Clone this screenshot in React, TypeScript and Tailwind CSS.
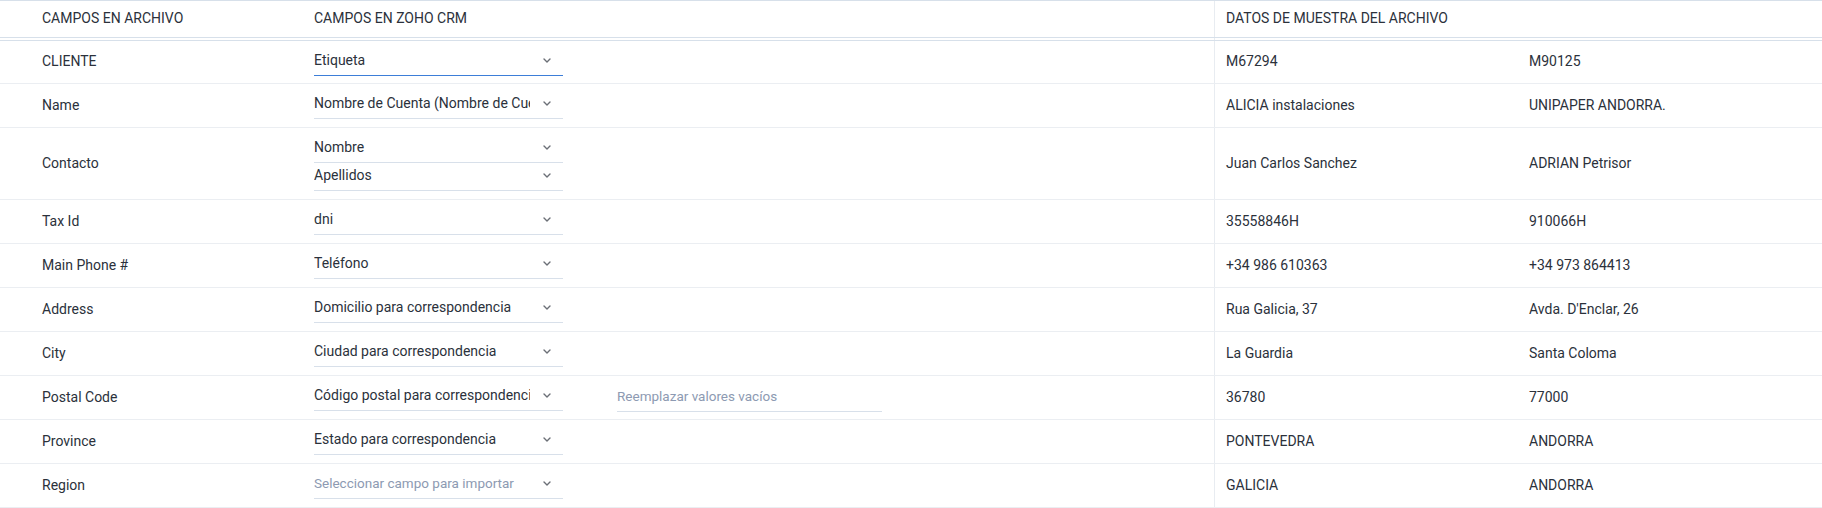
import React from "react";

type Row = {
  label: string;
  selects: { value: string; placeholder?: boolean; focused?: boolean }[];
  replace?: boolean;
  d1: string;
  d2: string;
};

const rows: Row[] = [
  { label: "CLIENTE", selects: [{ value: "Etiqueta", focused: true }], d1: "M67294", d2: "M90125" },
  { label: "Name", selects: [{ value: "Nombre de Cuenta (Nombre de Cuenta)" }], d1: "ALICIA instalaciones", d2: "UNIPAPER ANDORRA." },
  { label: "Contacto", selects: [{ value: "Nombre" }, { value: "Apellidos" }], d1: "Juan Carlos Sanchez", d2: "ADRIAN Petrisor" },
  { label: "Tax Id", selects: [{ value: "dni" }], d1: "35558846H", d2: "910066H" },
  { label: "Main Phone #", selects: [{ value: "Teléfono" }], d1: "+34 986 610363", d2: "+34 973 864413" },
  { label: "Address", selects: [{ value: "Domicilio para correspondencia" }], d1: "Rua Galicia, 37", d2: "Avda. D'Enclar, 26" },
  { label: "City", selects: [{ value: "Ciudad para correspondencia" }], d1: "La Guardia", d2: "Santa Coloma" },
  { label: "Postal Code", selects: [{ value: "Código postal para correspondencia" }], replace: true, d1: "36780", d2: "77000" },
  { label: "Province", selects: [{ value: "Estado para correspondencia" }], d1: "PONTEVEDRA", d2: "ANDORRA" },
  { label: "Region", selects: [{ value: "Seleccionar campo para importar", placeholder: true }], d1: "GALICIA", d2: "ANDORRA" },
];

function Chevron() {
  return (
    <svg width="8" height="5" viewBox="0 0 8 5" className="shrink-0">
      <path d="M1 1 L4 4 L7 1" fill="none" stroke="#6b6f76" strokeWidth="1.4" strokeLinecap="round" strokeLinejoin="round" />
    </svg>
  );
}

function Select({ value, placeholder, focused }: { value: string; placeholder?: boolean; focused?: boolean }) {
  return (
    <div
      className={
        "flex h-[28px] w-[249px] items-center pb-[2px] " +
        (focused ? "border-b border-[#3d7ed8]" : "border-b border-[#d8e0ea]")
      }
    >
      <div
        className={
          "w-[216px] overflow-hidden whitespace-nowrap " +
          (placeholder ? "text-[13.5px] text-[#8d9ab2]" : "text-[#2b313b]")
        }
      >
        {value}
      </div>
      <div className="ml-[13px] flex w-[8px] items-center">
        <Chevron />
      </div>
    </div>
  );
}

export default function App() {
  return (
    <div
      className="w-[1822px] bg-white text-[14px] text-[#2b313b]"
      style={{ fontFamily: "Roboto, 'Liberation Sans', sans-serif" }}
    >
      {/* Header */}
      <div className="flex h-[38px] border-y border-[#d7e0ea]">
        <div className="flex w-[314px] items-center pl-[42px] pb-[1px]">CAMPOS EN ARCHIVO</div>
        <div className="flex w-[900px] items-center pb-[1px]">CAMPOS EN ZOHO CRM</div>
        <div className="flex w-[608px] items-center border-l border-[#e8ecf1] pl-[11px] pb-[1px]">
          DATOS DE MUESTRA DEL ARCHIVO
        </div>
      </div>
      <div className="flex h-[2px]">
        <div className="w-[1214px]" />
        <div className="w-[608px] border-l border-[#e8ecf1]" />
      </div>
      <div className="border-t border-[#d7e0ea]">
        {rows.map((r, i) => (
          <div
            key={i}
            className={
              "flex border-b border-[#ebeef2] " +
              (r.selects.length > 1 ? "h-[72px]" : i === 0 ? "h-[43px]" : "h-[44px]")
            }
          >
            <div className="flex w-[314px] items-center pl-[42px] pb-[1px]">{r.label}</div>
            <div className="flex w-[900px] items-center">
              <div className="flex flex-col pb-[1px]">
                {r.selects.map((s, j) => (
                  <Select key={j} {...s} />
                ))}
              </div>
              {r.replace && (
                <div className="ml-[54px] flex h-[28px] w-[265px] items-center border-b border-[#d8e0ea] pb-[2px] text-[13.5px] text-[#8d9ab2]">
                  Reemplazar valores vacíos
                </div>
              )}
            </div>
            <div className="flex w-[304px] items-center border-l border-[#e8ecf1] pl-[11px] pb-[1px]">{r.d1}</div>
            <div className="flex w-[304px] items-center pl-[11px] pb-[1px]">{r.d2}</div>
          </div>
        ))}
      </div>
    </div>
  );
}
